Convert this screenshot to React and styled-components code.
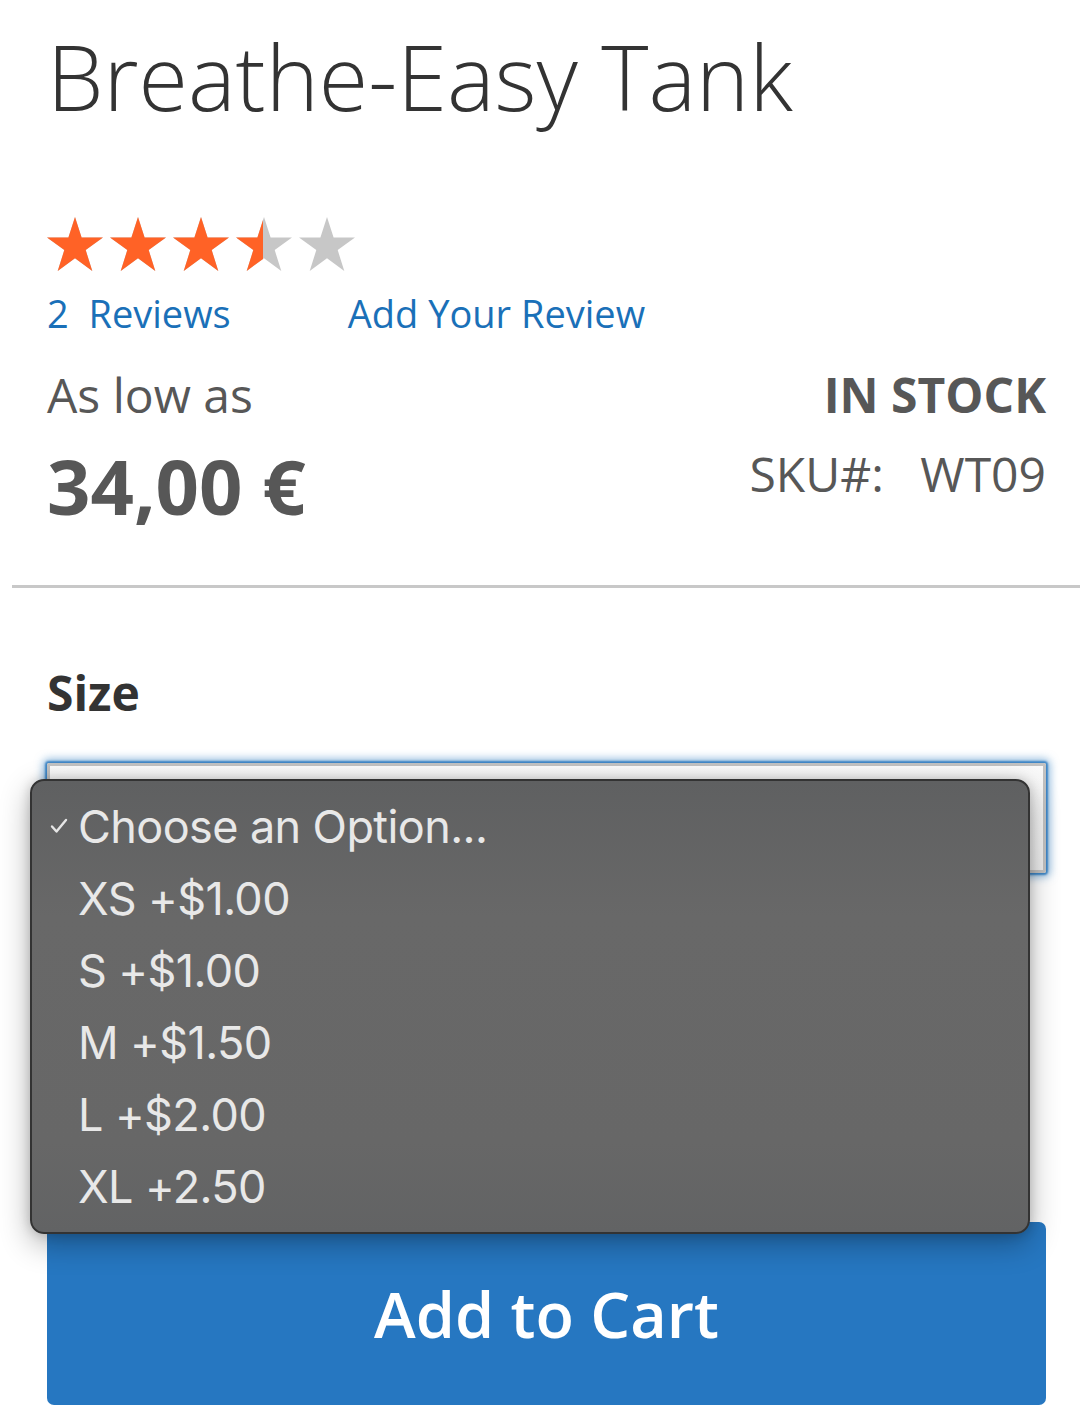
import React from "react";
import styled, { createGlobalStyle } from "styled-components";

const GlobalStyle = createGlobalStyle`
  html, body {
    margin: 0;
    padding: 0;
    background: #fff;
  }
  body {
    font-family: "Open Sans", "Liberation Sans", sans-serif;
    color: #333;
  }
`;

const options = [
  { label: "Choose an Option...", selected: true },
  { label: "XS +$1.00" },
  { label: "S +$1.00" },
  { label: "M +$1.50" },
  { label: "L +$2.00" },
  { label: "XL +2.50" },
];

const rating = 70;

const Star = ({ color }) => (
  <StarSvg viewBox="0 0 56 54">
    <path
      fill={color}
      d="M28 0 L34.6 20.4 L56 20.4 L38.7 33.1 L45.3 54 L28 41.2 L10.7 54 L17.3 33.1 L0 20.4 L21.4 20.4 Z"
    />
  </StarSvg>
);

const StarRow = ({ color }) => (
  <Stars>
    {[0, 1, 2, 3, 4].map((i) => (
      <Star key={i} color={color} />
    ))}
  </Stars>
);

const Check = () => (
  <CheckSvg viewBox="0 0 18 16">
    <path
      d="M2 8.5 L6.5 13.5 L16 2"
      fill="none"
      stroke="#e6e6e6"
      strokeWidth="2.4"
      strokeLinecap="round"
      strokeLinejoin="round"
    />
  </CheckSvg>
);

const App = () => {
  return (
    <Page>
      <GlobalStyle />
      <Title>Breathe-Easy Tank</Title>

      <Rating>
        <StarRow color="#c7c7c7" />
        <Filled style={{ width: `${rating}%` }}>
          <StarRow color="#ff6226" />
        </Filled>
      </Rating>

      <ReviewLinks>
        <Link>2&nbsp;&nbsp;Reviews</Link>
        <Link>Add Your Review</Link>
      </ReviewLinks>

      <PriceRow>
        <div>
          <LowAs>As low as</LowAs>
          <Price>34,00 €</Price>
        </div>
        <Info>
          <Stock>IN STOCK</Stock>
          <Sku>
            SKU#: <SkuValue>WT09</SkuValue>
          </Sku>
        </Info>
      </PriceRow>

      <Divider />

      <Label>Size</Label>
      <SelectWrap>
        <SelectBox />
        <Menu>
          {options.map((o) => (
            <Option key={o.label}>
              <Mark>{o.selected && <Check />}</Mark>
              {o.label}
            </Option>
          ))}
        </Menu>
      </SelectWrap>

      <CartButton>Add to Cart</CartButton>
    </Page>
  );
};

export default App;

const Page = styled.div`
  width: 1080px;
  box-sizing: border-box;
  padding: 21px 34px 20px 47px;
  overflow: hidden;
`;

const Title = styled.h1`
  margin: 0;
  font-size: 90px;
  font-weight: 300;
  line-height: 110px;
  color: #333;
  white-space: nowrap;
`;

const Rating = styled.div`
  position: relative;
  width: 308px;
  height: 54px;
  margin-top: 86px;
`;

const Filled = styled.div`
  position: absolute;
  top: 0;
  left: 0;
  height: 54px;
  overflow: hidden;
`;

const Stars = styled.div`
  display: flex;
  gap: 7px;
  width: 308px;
`;

const StarSvg = styled.svg`
  width: 56px;
  height: 54px;
  flex: none;
  display: block;
`;

const ReviewLinks = styled.div`
  display: flex;
  gap: 117px;
  margin-top: 16px;
`;

const Link = styled.a`
  font-size: 38px;
  line-height: 53px;
  color: #1a70b8;
  text-decoration: none;
  white-space: nowrap;
`;

const PriceRow = styled.div`
  display: flex;
  justify-content: space-between;
  margin-top: 26px;
`;

const LowAs = styled.div`
  font-size: 48px;
  line-height: 58px;
  color: #575757;
`;

const Price = styled.div`
  margin-top: 16px;
  font-size: 76px;
  font-weight: 700;
  line-height: 91px;
  color: #575757;
  white-space: nowrap;
`;

const Info = styled.div`
  display: flex;
  flex-direction: column;
  align-items: flex-end;
`;

const Stock = styled.div`
  font-size: 48px;
  font-weight: 700;
  line-height: 58px;
  color: #575757;
`;

const Sku = styled.div`
  margin-top: 21px;
  font-size: 48px;
  line-height: 58px;
  color: #575757;
  white-space: nowrap;
`;

const SkuValue = styled.span`
  margin-left: 24px;
`;

const Divider = styled.div`
  height: 3px;
  background: #c8c8c8;
  margin: 54px -34px 0 -35px;
`;

const Label = styled.div`
  margin-top: 76px;
  font-size: 48px;
  font-weight: 700;
  line-height: 58px;
  color: #333;
`;

const SelectWrap = styled.div`
  position: relative;
  margin-top: 41px;
`;

const SelectBox = styled.div`
  height: 110px;
  box-sizing: border-box;
  border: 3px solid #c2c2c2;
  border-radius: 2px;
  background: linear-gradient(#fafafa, #eeeeee);
  box-shadow: 0 0 2px 2px rgba(40, 120, 190, 0.85), 0 0 9px 4px rgba(70, 140, 200, 0.6);
`;

const Menu = styled.div`
  position: absolute;
  top: 16px;
  left: -17px;
  width: 1000px;
  box-sizing: border-box;
  padding: 9px 0 10px;
  border: 2px solid #333;
  border-radius: 14px;
  background: linear-gradient(#5f6061, #686868 30%, #676767 80%, #626364);
  box-shadow: 0 10px 30px rgba(0, 0, 0, 0.3), 0 0 12px rgba(0, 0, 0, 0.18);
  font-family: Inter, "Liberation Sans", sans-serif;
  z-index: 2;
`;

const Option = styled.div`
  display: flex;
  align-items: center;
  height: 72px;
  font-size: 45px;
  letter-spacing: -0.6px;
  color: #e8e8e8;
  white-space: nowrap;
`;

const Mark = styled.span`
  width: 46px;
  padding-left: 18px;
  box-sizing: border-box;
  display: flex;
  align-items: center;
  flex: none;
`;

const CheckSvg = styled.svg`
  width: 18px;
  height: 16px;
  display: block;
`;

const CartButton = styled.button`
  display: block;
  width: 100%;
  height: 183px;
  margin-top: 349px;
  border: none;
  border-radius: 7px;
  background: #2677c1;
  color: #fff;
  font-family: "Open Sans", "Liberation Sans", sans-serif;
  font-size: 63px;
  font-weight: 600;
  cursor: pointer;
`;
